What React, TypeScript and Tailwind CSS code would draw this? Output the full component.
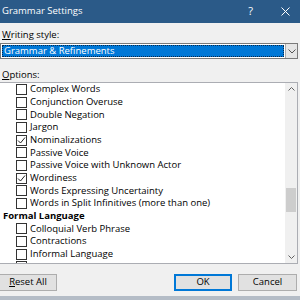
import React from "react";

const rows: { label: string; checked?: boolean; heading?: boolean }[] = [
  { label: "Complex Words" },
  { label: "Conjunction Overuse" },
  { label: "Double Negation" },
  { label: "Jargon" },
  { label: "Nominalizations", checked: true },
  { label: "Passive Voice" },
  { label: "Passive Voice with Unknown Actor" },
  { label: "Wordiness", checked: true },
  { label: "Words Expressing Uncertainty" },
  { label: "Words in Split Infinitives (more than one)" },
  { label: "Formal Language", heading: true },
  { label: "Colloquial Verb Phrase" },
  { label: "Contractions" },
  { label: "Informal Language" },
];

const Checkbox = ({ checked }: { checked?: boolean }) => (
  <span className="w-[11px] h-[11px] border border-[#333] bg-white flex items-center justify-center shrink-0">
    {checked && (
      <svg width="9" height="9" viewBox="0 0 9 9">
        <path d="M1 4.5 L3.5 7 L8 1.5" fill="none" stroke="#222" strokeWidth="1" />
      </svg>
    )}
  </span>
);

export default function App() {
  return (
    <div className="w-[300px] h-[300px] overflow-hidden bg-[#f0f0f0] flex flex-col text-black text-[9.5px] font-['Open_Sans','Noto_Sans',sans-serif]">
      {/* Title bar */}
      <div className="h-[23px] shrink-0 bg-[#2b5a88] flex items-center text-white">
        <span className="pl-[2px] text-[9.5px] flex-1">Grammar Settings</span>
        <span className="text-[11px] mr-[28px]">?</span>
        <svg width="9" height="9" viewBox="0 0 9 9" className="mr-[10px]">
          <path d="M0.5 0.5 L8.5 8.5 M8.5 0.5 L0.5 8.5" stroke="#fff" strokeWidth="1" />
        </svg>
      </div>

      {/* Writing style */}
      <div className="shrink-0 mt-[6px] h-[12px] leading-[12px] pl-[2px]">
        <span className="underline">W</span>riting style:
      </div>
      <div className="shrink-0 mt-[2px] h-[16px] mr-[2px] flex border border-[#7a7a7a] bg-white">
        <div className="flex-1 p-[1px]">
          <div className="h-full bg-[#0078d7] text-white border border-dotted border-[#0a2a4a] flex items-center pl-[1px]">
            Grammar &amp; Refinements
          </div>
        </div>
        <div className="w-[12px] border-l border-[#adadad] bg-[#e5e5e5] flex items-center justify-center">
          <svg width="8" height="5" viewBox="0 0 8 5">
            <path d="M0.5 0.5 L4 4 L7.5 0.5" fill="none" stroke="#555" strokeWidth="1" />
          </svg>
        </div>
      </div>

      {/* Options */}
      <div className="shrink-0 mt-[10px] h-[12px] leading-[12px] pl-[2px]">
        <span className="underline">O</span>ptions:
      </div>
      <div className="shrink-0 mt-[1px] h-[182px] mr-[2px] border border-l-0 border-[#abadb3] bg-white flex">
        <div className="flex-1 overflow-hidden">
          {rows.map((r, i) =>
            r.heading ? (
              <div key={i} className="h-[12.7px] flex items-center pl-[3px] font-bold whitespace-nowrap">
                {r.label}
              </div>
            ) : (
              <div key={i} className="h-[12.7px] flex items-center pl-[16px] gap-[3px] whitespace-nowrap">
                <Checkbox checked={r.checked} />
                <span>{r.label}</span>
              </div>
            )
          )}
          {/* partially scrolled-in row */}
          <div className="h-[12.7px] flex items-center pl-[16px]">
            <Checkbox />
          </div>
        </div>
        {/* Scrollbar */}
        <div className="w-[12px] bg-[#f0f0f0] flex flex-col">
          <div className="h-[12px] flex items-center justify-center">
            <svg width="7" height="4" viewBox="0 0 7 4">
              <path d="M0.5 3.5 L3.5 0.5 L6.5 3.5" fill="none" stroke="#606060" strokeWidth="1" />
            </svg>
          </div>
          <div className="h-[93px]" />
          <div className="h-[24px] mx-[1px] bg-[#cdcdcd]" />
          <div className="flex-1" />
          <div className="h-[12px] flex items-center justify-center">
            <svg width="7" height="4" viewBox="0 0 7 4">
              <path d="M0.5 0.5 L3.5 3.5 L6.5 0.5" fill="none" stroke="#606060" strokeWidth="1" />
            </svg>
          </div>
        </div>
      </div>

      {/* Buttons */}
      <div className="shrink-0 mt-[10px] h-[17px] flex">
        <button className="w-[58px] -ml-[1px] border border-[#adadad] bg-[#e1e1e1] flex items-center justify-center">
          <span>
            <span className="underline">R</span>eset All
          </span>
        </button>
        <div className="flex-1" />
        <button className="w-[58px] border-2 border-[#0078d7] bg-[#e1e1e1] flex items-center justify-center">
          OK
        </button>
        <button className="w-[59px] ml-[6px] mr-[3px] border border-[#adadad] bg-[#e1e1e1] flex items-center justify-center">
          Cancel
        </button>
      </div>
      <div className="shrink-0 mt-[5px] h-[4px] bg-[#b4bcc6]" />
    </div>
  );
}
